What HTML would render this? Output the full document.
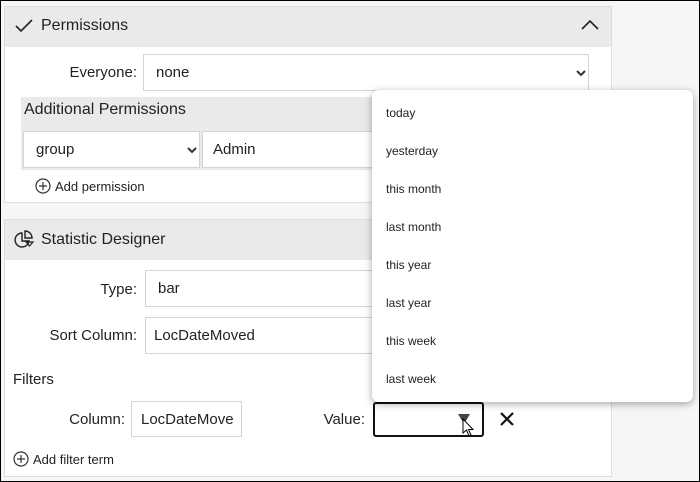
<!DOCTYPE html>
<html><head><meta charset="utf-8"><style>
*{box-sizing:border-box;margin:0;padding:0}
body{width:700px;height:482px;overflow:hidden;background:#f5f6f5;font-family:"Liberation Sans",sans-serif;color:#222;position:relative}
.frame{position:absolute;left:0;top:0;width:700px;height:482px;border:1px solid #000;pointer-events:none;z-index:10}
.abs{position:absolute}
.panel{position:absolute;left:4px;width:608px;background:#fff;border:1px solid #ddd}
.hdr{position:absolute;left:0;right:0;top:0;height:40px;background:#e9eaeb;font-size:16px}
.lbl{position:absolute;font-size:15px;text-align:right}
.box{position:absolute;border:1px solid #d4d4d4;background:#fff;font-size:15px;padding-left:12px;display:flex;align-items:center;overflow:hidden;white-space:nowrap}
.dd{position:absolute;left:372px;top:90px;width:321px;height:312px;background:#fff;border-radius:7px;box-shadow:0 2px 8px rgba(0,0,0,.35);z-index:5}
.dd div{position:absolute;left:14px;font-size:12px;color:#222}
</style></head><body>
<div class="panel" style="top:6px;height:197px">
 <div class="hdr">
  <svg class="abs" style="left:10px;top:12px" width="18" height="14" viewBox="0 0 18 14"><path d="M1 7 L6 12 L17 1" fill="none" stroke="#222" stroke-width="1.6"/></svg>
  <span class="abs" style="left:36px;top:10px">Permissions</span>
  <svg class="abs" style="left:576px;top:13px" width="18" height="10" viewBox="0 0 18 10"><path d="M1 9 L9 1 L17 9" fill="none" stroke="#222" stroke-width="1.6"/></svg>
 </div>
 <div class="lbl" style="left:40px;width:92px;top:57px">Everyone:</div>
 <div class="box" style="left:138px;top:47px;width:446px;height:37px">none</div>
 <svg class="abs" style="left:571px;top:63px" width="10" height="7" viewBox="0 0 10 7"><path d="M1 1 L5 5 L9 1" fill="none" stroke="#333" stroke-width="2"/></svg>
 <div class="abs" style="left:16px;top:90px;width:360px;height:73px;background:#e9eaeb"></div>
 <div class="abs" style="left:19px;top:94px;font-size:16px">Additional Permissions</div>
 <div class="box" style="left:18px;top:124px;width:177px;height:37px">group</div>
 <svg class="abs" style="left:182px;top:140px" width="10" height="7" viewBox="0 0 10 7"><path d="M1 1 L5 5 L9 1" fill="none" stroke="#333" stroke-width="2"/></svg>
 <div class="box" style="left:197px;top:124px;width:180px;height:37px;padding-left:10px">Admin</div>
 <svg class="abs" style="left:30px;top:171px" width="16" height="16" viewBox="0 0 16 16"><circle cx="8" cy="8" r="7" fill="none" stroke="#333" stroke-width="1.2"/><path d="M8 4V12M4 8H12" stroke="#333" stroke-width="1.2"/></svg>
 <div class="abs" style="left:50px;top:172px;font-size:13px">Add permission</div>
</div>
<div class="panel" style="top:219px;height:258px">
 <div class="hdr">
  <svg class="abs" style="left:8px;top:10px" width="22" height="20" viewBox="0 0 22 20"><path d="M9 3 A7 7 0 1 0 16 11 L9 11 Z" fill="none" stroke="#222" stroke-width="1.4"/><path d="M12 1 L12 8 L19 8 A7 7 0 0 0 12 1Z" fill="none" stroke="#222" stroke-width="1.4"/><path d="M13 12 L20 12 L16.5 16Z" fill="none" stroke="#222" stroke-width="1.2"/></svg>
  <span class="abs" style="left:36px;top:11px">Statistic Designer</span>
 </div>
 <div class="lbl" style="left:40px;width:92px;top:61px">Type:</div>
 <div class="box" style="left:140px;top:50px;width:240px;height:37px">bar</div>
 <div class="lbl" style="left:20px;width:112px;top:107px">Sort Column:</div>
 <div class="box" style="left:140px;top:97px;width:240px;height:37px;padding-left:8px">LocDateMoved</div>
 <div class="abs" style="left:8px;top:151px;font-size:15px">Filters</div>
 <div class="lbl" style="left:30px;width:90px;top:191px">Column:</div>
 <div class="box" style="left:126px;top:181px;width:111px;height:36px;padding-left:9px">LocDateMove</div>
 <div class="lbl" style="left:280px;width:80px;top:191px">Value:</div>
 <div class="abs" style="left:368px;top:182px;width:111px;height:35px;border:2px solid #111;border-radius:3px"></div>
 <svg class="abs" style="left:453px;top:194px" width="12" height="10" viewBox="0 0 12 10"><path d="M0 0H12L6 10Z" fill="#444"/></svg>
 <svg class="abs" style="left:494px;top:191px" width="16" height="16" viewBox="0 0 16 16"><path d="M2 2L14 14M14 2L2 14" stroke="#111" stroke-width="2.2"/></svg>
 <svg class="abs" style="left:8px;top:231px" width="16" height="16" viewBox="0 0 16 16"><circle cx="8" cy="8" r="7" fill="none" stroke="#333" stroke-width="1.2"/><path d="M8 4V12M4 8H12" stroke="#333" stroke-width="1.2"/></svg>
 <div class="abs" style="left:28px;top:232px;font-size:13px">Add filter term</div>
</div>
<svg class="abs" style="left:462px;top:418px;z-index:6" width="14" height="20" viewBox="0 0 14 20"><path d="M1 1 L1 15 L4.5 12 L7 18 L9 17 L6.5 11.5 L11 11.5 Z" fill="#fff" stroke="#000" stroke-width="1"/></svg>
<div class="dd">
 <div style="top:16px">today</div>
 <div style="top:54px">yesterday</div>
 <div style="top:92px">this month</div>
 <div style="top:130px">last month</div>
 <div style="top:168px">this year</div>
 <div style="top:206px">last year</div>
 <div style="top:244px">this week</div>
 <div style="top:282px">last week</div>
</div>
<div class="frame"></div>
</body></html>
